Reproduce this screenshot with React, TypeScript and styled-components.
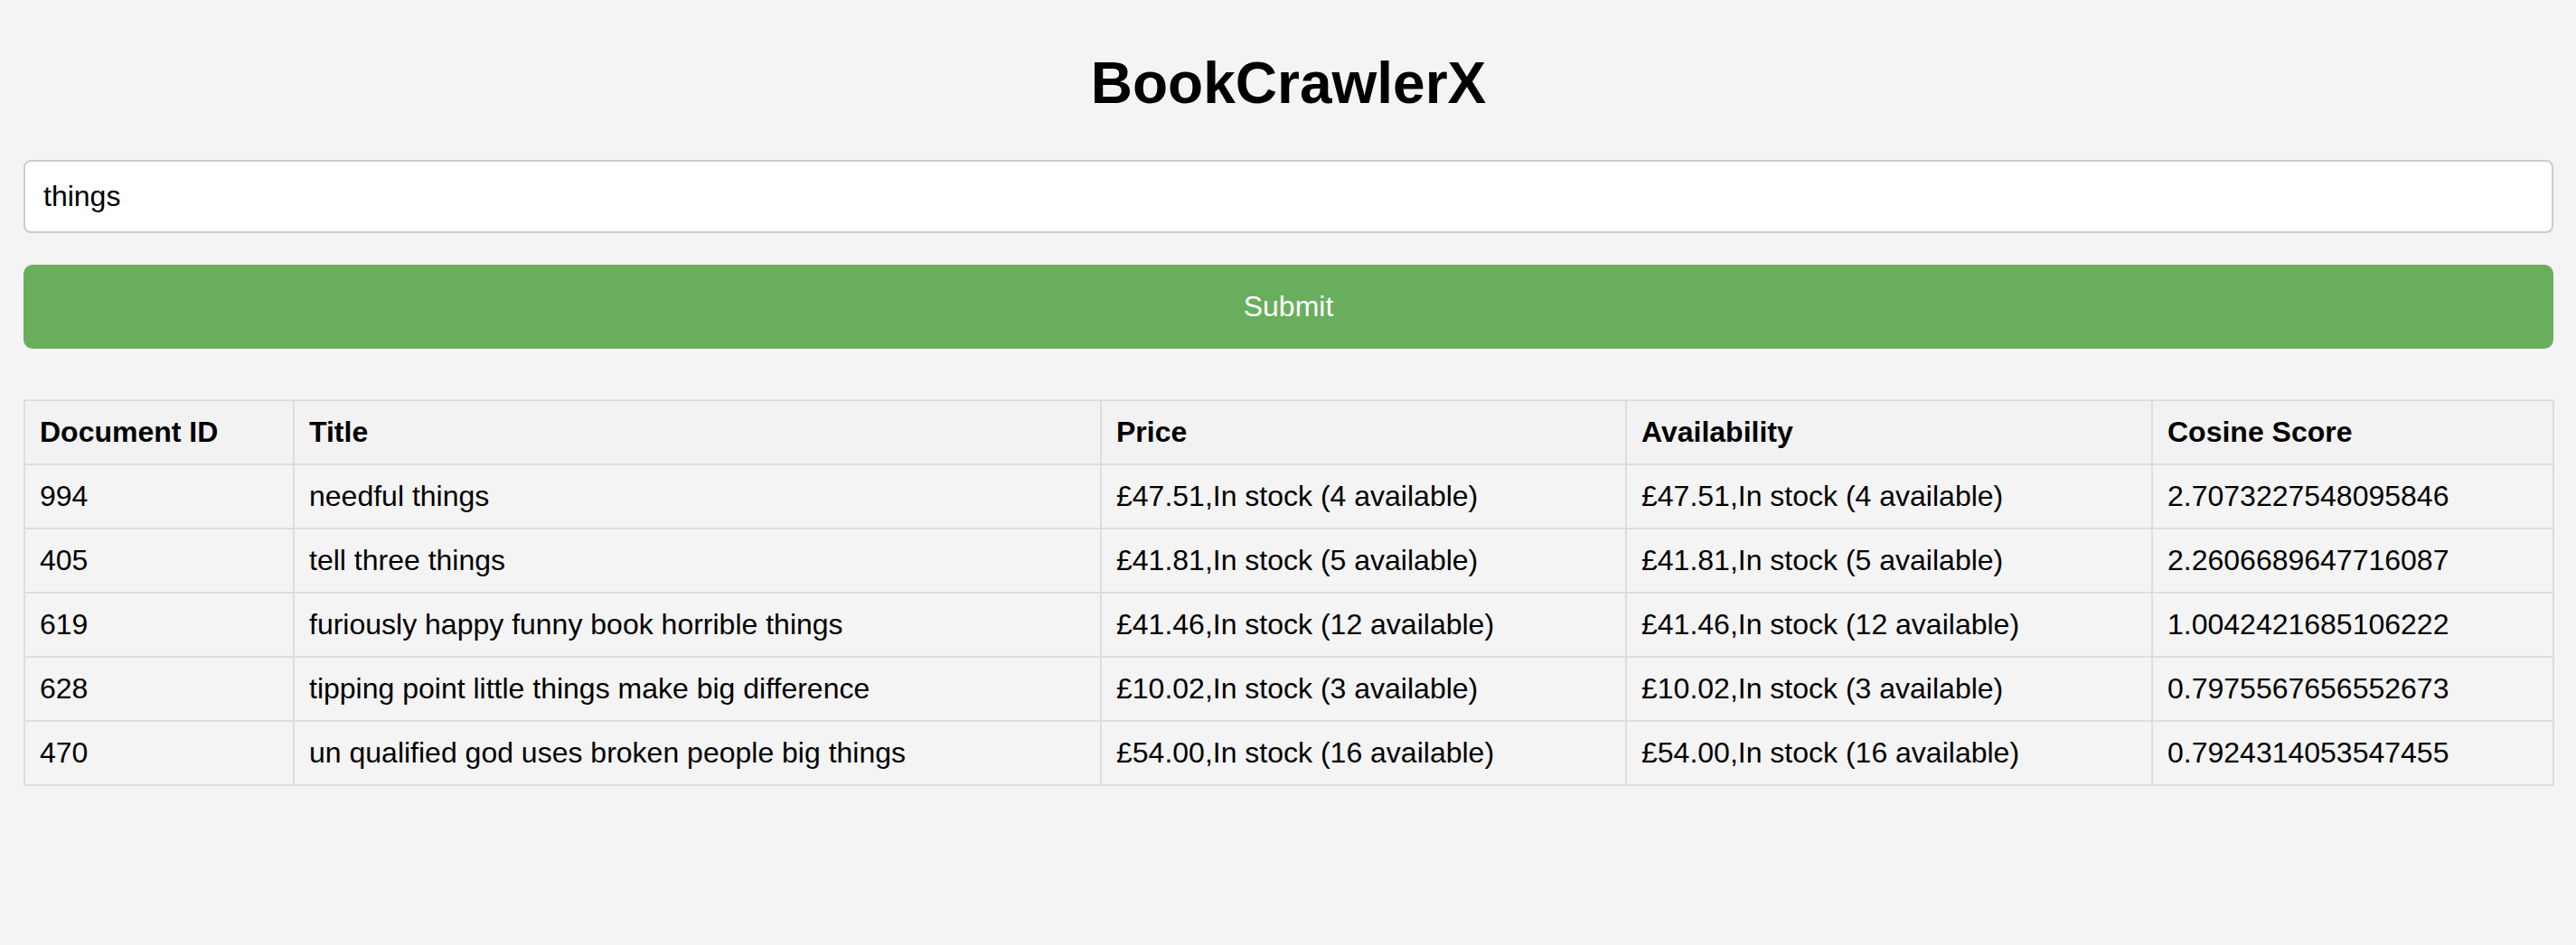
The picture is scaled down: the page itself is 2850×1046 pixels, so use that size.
import { useState } from "react";
import styled, { createGlobalStyle } from "styled-components";

const GlobalStyle = createGlobalStyle`
  html, body {
    margin: 0;
    padding: 0;
    background-color: #f4f4f4;
    font-family: "Liberation Sans", Arial, Helvetica, sans-serif;
  }
`;

type Book = {
  id: number;
  title: string;
  price: string;
  availability: string;
  score: string;
};

const results: Book[] = [
  {
    id: 994,
    title: "needful things",
    price: "£47.51,In stock (4 available)",
    availability: "£47.51,In stock (4 available)",
    score: "2.7073227548095846",
  },
  {
    id: 405,
    title: "tell three things",
    price: "£41.81,In stock (5 available)",
    availability: "£41.81,In stock (5 available)",
    score: "2.2606689647716087",
  },
  {
    id: 619,
    title: "furiously happy funny book horrible things",
    price: "£41.46,In stock (12 available)",
    availability: "£41.46,In stock (12 available)",
    score: "1.0042421685106222",
  },
  {
    id: 628,
    title: "tipping point little things make big difference",
    price: "£10.02,In stock (3 available)",
    availability: "£10.02,In stock (3 available)",
    score: "0.7975567656552673",
  },
  {
    id: 470,
    title: "un qualified god uses broken people big things",
    price: "£54.00,In stock (16 available)",
    availability: "£54.00,In stock (16 available)",
    score: "0.7924314053547455",
  },
];

const columns = [
  { label: "Document ID", width: 298 },
  { label: "Title", width: 893 },
  { label: "Price", width: 581 },
  { label: "Availability", width: 582 },
  { label: "Cosine Score", width: 444 },
];

export default function App() {
  const [query, setQuery] = useState("things");

  return (
    <>
      <GlobalStyle />
      <Styled.Page>
        <Styled.Title>BookCrawlerX</Styled.Title>
        <Styled.SearchForm onSubmit={(e) => e.preventDefault()}>
          <Styled.SearchInput
            type="text"
            value={query}
            onChange={(e) => setQuery(e.target.value)}
          />
          <Styled.SubmitButton type="submit">Submit</Styled.SubmitButton>
        </Styled.SearchForm>

        <Styled.ResultsTable>
          <colgroup>
            {columns.map((c) => (
              <Styled.Col key={c.label} $width={c.width} />
            ))}
          </colgroup>
          <thead>
            <tr>
              {columns.map((c) => (
                <Styled.HeadCell key={c.label}>{c.label}</Styled.HeadCell>
              ))}
            </tr>
          </thead>
          <tbody>
            {results.map((book) => (
              <tr key={book.id}>
                <Styled.Cell>{book.id}</Styled.Cell>
                <Styled.Cell>{book.title}</Styled.Cell>
                <Styled.Cell>{book.price}</Styled.Cell>
                <Styled.Cell>{book.availability}</Styled.Cell>
                <Styled.Cell>{book.score}</Styled.Cell>
              </tr>
            ))}
          </tbody>
        </Styled.ResultsTable>
      </Styled.Page>
    </>
  );
}

const Styled = {
  Page: styled.div`
    padding: 55px 25px 60px 26px;
    color: #000;
  `,
  Title: styled.h1`
    margin: 0 0 48px;
    text-align: center;
    font-size: 64px;
    font-weight: 700;
  `,
  SearchForm: styled.form`
    display: flex;
    flex-direction: column;
    gap: 35px;
    margin-bottom: 56px;
  `,
  SearchInput: styled.input`
    box-sizing: border-box;
    width: 100%;
    padding: 20px;
    border: 2px solid #cccccc;
    border-radius: 8px;
    background: #ffffff;
    font-family: inherit;
    font-size: 32px;
    color: #000;
    outline: none;
  `,
  SubmitButton: styled.button`
    box-sizing: border-box;
    width: 100%;
    padding: 28px 0;
    border: none;
    border-radius: 10px;
    background-color: #69ae5d;
    color: #ffffff;
    font-family: inherit;
    font-size: 32px;
    line-height: normal;
    cursor: pointer;
  `,
  ResultsTable: styled.table`
    width: 100%;
    table-layout: fixed;
    border-collapse: collapse;
    font-size: 32px;
  `,
  Col: styled.col<{ $width: number }>`
    width: ${(p) => p.$width}px;
  `,
  HeadCell: styled.th`
    padding: 16px;
    border: 2px solid #dddddd;
    background-color: #f2f2f2;
    text-align: left;
    font-weight: 700;
  `,
  Cell: styled.td`
    padding: 16px;
    border: 2px solid #dddddd;
    text-align: left;
    white-space: nowrap;
  `,
};
